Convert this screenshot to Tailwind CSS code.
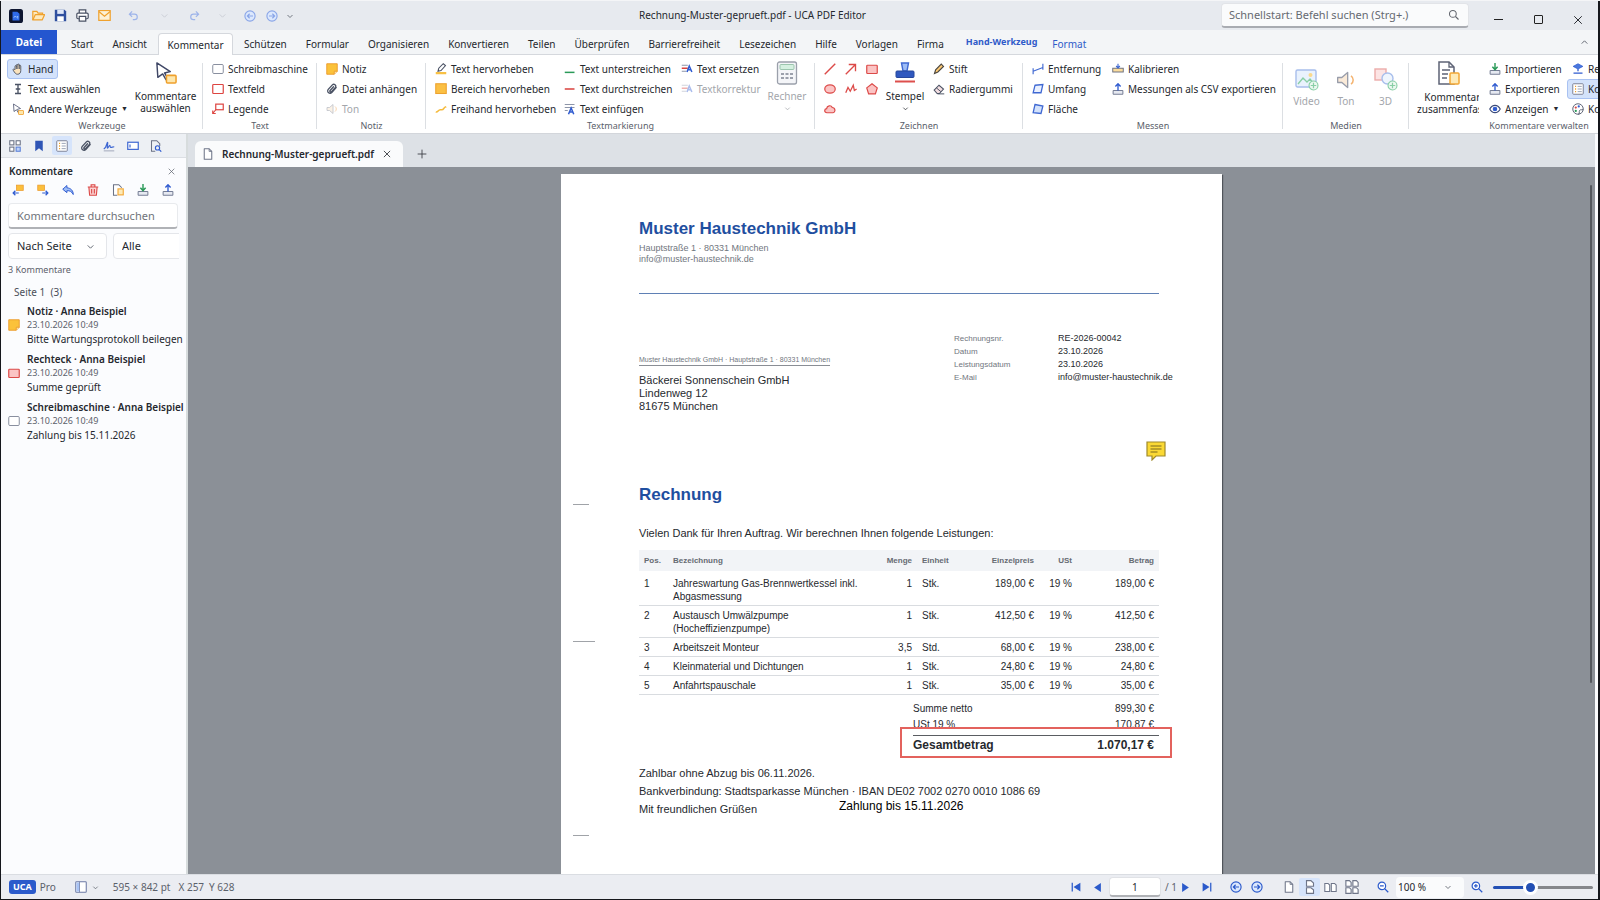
<!DOCTYPE html>
<html lang="de">
<head>
    <meta charset="UTF-8">
    <meta name="viewport" content="width=device-width, initial-scale=1.0">
    <title>Rechnung-Muster-geprueft.pdf - UCA PDF Editor</title>
    <script src="https://cdn.jsdelivr.net/npm/@tailwindcss/browser@4"></script>
</head>
<body class="h-screen overflow-hidden bg-[#15171c] font-['Noto_Sans','Open_Sans',sans-serif] text-[10px] text-[#25282e]">

    <!-- Icon sprite -->
    <svg class="hidden" fill="none">
        <symbol id="i-chevron" viewBox="0 0 16 16"><path d="M3 6l5 5 5-5" fill="none" stroke="currentColor" stroke-width="1.700"/></symbol>
        <symbol id="i-close" viewBox="0 0 16 16"><path d="M3 3l10 10M13 3L3 13" fill="none" stroke="currentColor" stroke-width="1.300"/></symbol>
        <symbol id="i-undo" viewBox="0 0 16 16"><path d="M6 2L2 6l4 4M2 6h7.500a4 4 0 010 8H7" fill="none" stroke="currentColor" stroke-width="1.700"/></symbol>
        <symbol id="i-circle-left" viewBox="0 0 16 16"><circle cx="8" cy="8" r="6.800" fill="#dce8fd" stroke="currentColor" stroke-width="1.500"/><path d="M12 8H4.500M7.500 5l-3 3 3 3" fill="none" stroke="currentColor" stroke-width="1.600"/></symbol>
        <symbol id="i-circle-right" viewBox="0 0 16 16"><circle cx="8" cy="8" r="6.800" fill="#dce8fd" stroke="currentColor" stroke-width="1.500"/><path d="M4 8h7.500M8.500 5l3 3-3 3" fill="none" stroke="currentColor" stroke-width="1.600"/></symbol>
        <symbol id="i-search" viewBox="0 0 16 16"><circle cx="6.500" cy="6.500" r="4.500" fill="none" stroke="currentColor" stroke-width="1.400"/><path d="M10 10l4 4" stroke="currentColor" stroke-width="1.500"/></symbol>
        <symbol id="i-cursor-note" viewBox="0 0 24 24"><path d="M3 2l14 9-6 1.500 3.500 6-2 1-3.500-6L4 17z" fill="#fff" stroke="#3f4766" stroke-width="1.500" stroke-linejoin="round"/><rect x="13" y="15" width="10" height="8" rx="1" fill="#fde7ad" stroke="#efa02c" stroke-width="1.600"/></symbol>
        <symbol id="i-clip" viewBox="0 0 16 16"><path d="M13.500 6L8 12.500a3.200 3.200 0 01-5-4L8.500 2.500a2.600 2.600 0 014 3.300L7.500 11.500a1.200 1.200 0 01-2-1.500L10 5" fill="none" stroke="#4a5264" stroke-width="1.800" stroke-linecap="round"/></symbol>
        <symbol id="i-note" viewBox="0 0 16 16"><path d="M1 1h14v10l-4 4H1z" fill="#fbc23a" stroke="#eb9a2b" stroke-width="1.200"/><path d="M15 11h-4v4" fill="#fde7ad" stroke="#eb9a2b" stroke-width="1.200"/></symbol>
        <symbol id="i-box-gray" viewBox="0 0 16 16"><rect x="1" y="2" width="14" height="12" rx="1.500" fill="#fff" stroke="#868c9c" stroke-width="1.300"/></symbol>
        <symbol id="i-box-red" viewBox="0 0 16 16"><rect x="1" y="2" width="14" height="12" rx="1" fill="#fff" stroke="#dd4440" stroke-width="1.600"/></symbol>
        <symbol id="i-rect-red" viewBox="0 0 16 16"><rect x="1" y="3" width="14" height="11" rx="1" fill="#fbc4c4" stroke="#dc4a48" stroke-width="1.600"/></symbol>
        <symbol id="i-speaker" viewBox="0 0 24 24"><path d="M2 9h5l7-6v18l-7-6H2z" fill="#f9e6cf" stroke="#7f8596" stroke-width="1.600" stroke-linejoin="round"/><path d="M18 7c3.500 2.500 3.500 7.500 0 10" fill="none" stroke="#f2a04a" stroke-width="1.800"/></symbol>
        <symbol id="i-import" viewBox="0 0 16 16"><path d="M1.500 10h13v5h-13z" fill="#e6e9f1" stroke="#727a92" stroke-width="1.300"/><path d="M8 0v8M4.500 5L8 8.800 11.500 5" fill="none" stroke="#2a9a58" stroke-width="1.900"/></symbol>
        <symbol id="i-export" viewBox="0 0 16 16"><path d="M1.500 10h13v5h-13z" fill="#e6e9f1" stroke="#727a92" stroke-width="1.300"/><path d="M8 10V2M4.500 4.700L8 1l3.500 3.700" fill="none" stroke="#2f5bd0" stroke-width="1.800"/></symbol>
        <symbol id="i-plus-green" viewBox="0 0 16 16"><circle cx="8" cy="8" r="6.500" fill="#e0f4e7" stroke="#3bb06c" stroke-width="1.600"/><path d="M8 4v8M4 8h8" stroke="#3bb06c" stroke-width="1.800"/></symbol>
        <symbol id="i-list" viewBox="0 0 16 16"><rect x="1" y="1" width="14" height="14" rx="1" fill="#fff" stroke="#7b8296" stroke-width="1.300"/><path d="M4 4.500h1.500M4 8h1.500M4 11.500h1.500" stroke="#efa02c" stroke-width="1.800"/><path d="M7.500 4.500H13M7.500 8H13M7.500 11.500H13" stroke="#9aa2b6" stroke-width="1.300"/></symbol>
        <symbol id="i-page" viewBox="0 0 16 16"><path d="M3 1h6.500L13 4.500V15H3z" fill="#fff" stroke="#6f7689" stroke-width="1.400" stroke-linejoin="round"/><path d="M9.500 1v3.500H13" fill="none" stroke="#6f7689" stroke-width="1.200"/></symbol>
    </svg>

    <div class="flex h-full flex-col border-t border-[#f4f5f7] pr-[2px] pb-px pl-px">

        <!-- Title bar -->
        <header class="flex h-[29px] shrink-0 items-center bg-[#e7eaef]">
            <div class="flex w-[283px] shrink-0 items-center whitespace-nowrap pl-2">
                <div class="flex w-[151px] shrink-0 items-center gap-[9px]">
                    <svg class="size-[14px] shrink-0" viewBox="0 0 16 16"><rect width="16" height="16" rx="3" fill="#0d1530"/><path d="M4 3h5.500L12 5.500V13H4z" fill="#2f6bea"/><path d="M5.500 10l1.500-2 1.500 1.500L10 8v3" stroke="#9dc3ff" fill="none"/></svg>
                    <button aria-label="Öffnen"><svg class="size-[13px]" viewBox="0 0 16 16"><path d="M1 13.500V3h5l1.500 2H13v2" fill="#fde9bd" stroke="#efa02c" stroke-width="1.500"/><path d="M1 13.500L4 7h11.500l-3 6.500z" fill="#fde9bd" stroke="#efa02c" stroke-width="1.500" stroke-linejoin="round"/></svg></button>
                    <button aria-label="Speichern"><svg class="size-[13px]" viewBox="0 0 16 16"><path d="M1 1h12l2 2v12H1z" fill="#2f4f9f"/><path d="M4 1h8v5H4z" fill="#dfe7f8"/><path d="M4 9h8v6H4z" fill="#fff"/></svg></button>
                    <button aria-label="Drucken"><svg class="size-[13px]" viewBox="0 0 16 16" fill="#fff" stroke="#4a5264" stroke-width="1.500"><path d="M4 5V1h8v4"/><rect x="1" y="5" width="14" height="7" rx="1.500"/><path d="M4 9h8v6H4z"/></svg></button>
                    <button aria-label="Senden"><svg class="size-[13px]" viewBox="0 0 16 16" fill="#fdf1d6" stroke="#efa02c" stroke-width="1.500"><rect x="1" y="2" width="14" height="12"/><path d="M1 3l7 6 7-6"/></svg></button>
                    <button aria-label="Rückgängig" class="ml-2 text-[#9db4ea]"><svg class="size-[11px]"><use href="#i-undo"/></svg></button>
                </div>
                <button aria-label="Rückgängig-Liste" class="text-[#c9cdd5]"><svg class="size-[9px]"><use href="#i-chevron"/></svg></button>
                <button aria-label="Wiederholen" class="ml-5 text-[#9db4ea]"><svg class="size-[11px] -scale-x-100"><use href="#i-undo"/></svg></button>
                <button aria-label="Wiederholen-Liste" class="ml-[18px] text-[#c9cdd5]"><svg class="size-[9px]"><use href="#i-chevron"/></svg></button>
                <button aria-label="Zurück" class="ml-[17px] text-[#8aa6e8]"><svg class="size-[12px]"><use href="#i-circle-left"/></svg></button>
                <button aria-label="Vor" class="ml-[10px] text-[#8aa6e8]"><svg class="size-[12px]"><use href="#i-circle-right"/></svg></button>
                <button aria-label="Anpassen" class="ml-2 text-[#60656f]"><svg class="size-[8px]"><use href="#i-chevron"/></svg></button>
            </div>
            <h1 class="flex-1 text-center">Rechnung-Muster-geprueft.pdf - UCA PDF Editor</h1>
            <label class="flex h-[25px] w-[248px] items-center rounded border border-b-2 border-[#e2e4e8] border-b-[#a9acb2] bg-[#fafbfc] pr-2 pl-[7px] text-[#60646c]">
                <input type="text" aria-label="Schnellstart" placeholder="Schnellstart: Befehl suchen (Strg+.)" class="min-w-0 flex-1 text-[11px] outline-none placeholder:text-[#666a71]">
                <svg class="size-[12px]"><use href="#i-search"/></svg>
            </label>
            <div class="flex items-center pt-2 pl-[9px]">
                <button aria-label="Minimieren" class="flex w-10 justify-center"><span class="h-px w-[9px] bg-[#222]"></span></button>
                <button aria-label="Maximieren" class="flex w-10 justify-center"><span class="size-[9px] rounded-[1px] border border-[#222]"></span></button>
                <button aria-label="Schließen" class="flex w-10 justify-center"><svg class="size-[12px]"><use href="#i-close"/></svg></button>
            </div>
        </header>

        <!-- Ribbon tabs -->
        <nav class="flex h-[25px] shrink-0 items-stretch gap-px border-b border-[#d5d8dd] bg-[#f3f5f7] leading-[20px]">
            <button class="w-14 bg-[#2456cf] font-bold text-white">Datei</button>
            <button class="ml-1 px-[9px] pt-1">Start</button>
            <button class="px-[9px] pt-1">Ansicht</button>
            <button class="mx-px mt-[3px] -mb-px w-[75px] rounded-t border border-b-0 border-[#d5d8dd] bg-white">Kommentar</button>
            <button class="px-[9px] pt-1">Schützen</button>
            <button class="px-[9px] pt-1">Formular</button>
            <button class="px-[9px] pt-1">Organisieren</button>
            <button class="px-[9px] pt-1">Konvertieren</button>
            <button class="px-[9px] pt-1">Teilen</button>
            <button class="px-[9px] pt-1">Überprüfen</button>
            <button class="px-[9px] pt-1">Barrierefreiheit</button>
            <button class="px-[9px] pt-1">Lesezeichen</button>
            <button class="px-[9px] pt-1">Hilfe</button>
            <button class="px-[9px] pt-1">Vorlagen</button>
            <button class="px-[9px] pt-1">Firma</button>
            <span class="pt-[2px] pr-[5px] pl-3 text-[9px] font-bold text-[#2f5bc9]">Hand-Werkzeug</span>
            <button class="px-[9px] pt-1 text-[#2f5bc9]">Format</button>
            <button aria-label="Menüband einklappen" class="mr-[9px] ml-auto text-[#60656f]"><svg class="size-[9px] rotate-180"><use href="#i-chevron"/></svg></button>
        </nav>

        <!-- Ribbon -->
        <section class="flex h-[79px] shrink-0 overflow-hidden border-b border-[#d3d6db] bg-white pt-1 whitespace-nowrap">

            <div class="relative flex w-[202px] shrink-0 flex-col">
                <div class="flex h-[60px] pl-[6px]">
                    <div class="flex w-[123px] flex-col items-start">
                        <button class="flex h-5 items-center gap-1 rounded-[3px] border border-[#a9c2f2] bg-[#d3e2fb] px-1">
                            <svg class="size-[12px]" viewBox="0 0 16 16" fill="#fbe3bd" stroke="#4a5264" stroke-width="1.200" stroke-linejoin="round"><path d="M4 9V4.500c0-1.300 1.800-1.300 1.800 0V3c0-1.500 2-1.500 2 0v-.5c0-1.500 2-1.500 2 0V4c0-1.300 1.900-1.300 1.900 0v6c0 3-1.500 5-4.200 5-2.500 0-3.500-1.500-6-5.500-.6-1.200.9-2 1.700-1z"/><path d="M5.800 4v4M7.800 3v5M9.800 3.500V8"/></svg>
                            <span>Hand</span>
                        </button>
                        <button class="flex h-5 items-center gap-1 border border-transparent px-1">
                            <svg class="size-[12px]" viewBox="0 0 16 16" fill="none" stroke="#4a5264" stroke-width="1.800"><path d="M4 2h8M4 14h8M8 2v12M5 8h6"/></svg>
                            <span>Text auswählen</span>
                        </button>
                        <button class="flex h-5 items-center gap-1 border border-transparent px-1">
                            <svg class="size-[12px]"><use href="#i-cursor-note"/></svg>
                            <span>Andere Werkzeuge</span><span class="text-[7px]">▼</span>
                        </button>
                    </div>
                    <button class="flex w-[71px] flex-col items-center leading-[12px]">
                        <svg class="mt-[2px] mb-[6px] size-[23px] shrink-0"><use href="#i-cursor-note"/></svg>
                        Kommentare<br>auswählen
                    </button>
                </div>
                <p class="text-center text-[9px] leading-[13px] text-[#5b616b]">Werkzeuge</p>
                <span class="absolute inset-y-1 right-0 w-px bg-[#dcdfe3]"></span>
            </div>

            <div class="relative flex w-[114px] shrink-0 flex-col">
                <div class="flex h-[60px] flex-col items-start pl-1">
                    <button class="flex h-5 items-center gap-1 border border-transparent px-1"><svg class="size-[12px]"><use href="#i-box-gray"/></svg>Schreibmaschine</button>
                    <button class="flex h-5 items-center gap-1 border border-transparent px-1"><svg class="size-[12px]"><use href="#i-box-red"/></svg>Textfeld</button>
                    <button class="flex h-5 items-center gap-1 border border-transparent px-1"><svg class="size-[12px]" viewBox="0 0 16 16" fill="none" stroke="#dd4440" stroke-width="1.600"><rect x="5" y="1.500" width="10" height="7.500"/><path d="M5 9l-4 5M1 10v4h4"/></svg>Legende</button>
                </div>
                <p class="text-center text-[9px] leading-[13px] text-[#5b616b]">Text</p>
                <span class="absolute inset-y-1 right-0 w-px bg-[#dcdfe3]"></span>
            </div>

            <div class="relative flex w-[109px] shrink-0 flex-col">
                <div class="flex h-[60px] flex-col items-start pl-1">
                    <button class="flex h-5 items-center gap-1 border border-transparent px-1"><svg class="size-[12px]"><use href="#i-note"/></svg>Notiz</button>
                    <button class="flex h-5 items-center gap-1 border border-transparent px-1"><svg class="size-[12px]"><use href="#i-clip"/></svg>Datei anhängen</button>
                    <button class="flex h-5 items-center gap-1 border border-transparent px-1 text-[#a3a6ab]" disabled><svg class="size-[12px] opacity-50"><use href="#i-speaker"/></svg>Ton</button>
                </div>
                <p class="text-center text-[9px] leading-[13px] text-[#5b616b]">Notiz</p>
                <span class="absolute inset-y-1 right-0 w-px bg-[#dcdfe3]"></span>
            </div>

            <div class="relative flex w-[389px] shrink-0 flex-col">
                <div class="flex h-[60px] pl-1">
                    <div class="flex w-[129px] flex-col items-start">
                        <button class="flex h-5 items-center gap-1 border border-transparent px-1"><svg class="size-[12px]" viewBox="0 0 16 16"><path d="M1 13.500h14" stroke="#f8c043" stroke-width="3"/><path d="M4 11l1-4 6-6 3 2.500-6 6.500z" fill="#fff" stroke="#4a5264" stroke-width="1.400"/></svg>Text hervorheben</button>
                        <button class="flex h-5 items-center gap-1 border border-transparent px-1"><svg class="size-[12px]" viewBox="0 0 16 16"><rect x="1" y="1" width="14" height="13" fill="#fbc044" stroke="#eda22e" stroke-width="1.400"/></svg>Bereich hervorheben</button>
                        <button class="flex h-5 items-center gap-1 border border-transparent px-1"><svg class="size-[12px]" viewBox="0 0 16 16" fill="none"><path d="M1 12c3 1 3-3 6-3s3 1 5-2 1-1 3-2" stroke="#f5bb3d" stroke-width="2"/></svg>Freihand hervorheben</button>
                    </div>
                    <div class="flex w-[117px] flex-col items-start">
                        <button class="flex h-5 items-center gap-1 border border-transparent px-1"><svg class="size-[12px]" viewBox="0 0 16 16"><path d="M1 12.500h13" stroke="#2a9a58" stroke-width="2"/></svg>Text unterstreichen</button>
                        <button class="flex h-5 items-center gap-1 border border-transparent px-1"><svg class="size-[12px]" viewBox="0 0 16 16"><path d="M1 8h13" stroke="#d9413d" stroke-width="2"/></svg>Text durchstreichen</button>
                        <button class="flex h-5 items-center gap-1 border border-transparent px-1"><svg class="size-[12px]" viewBox="0 0 16 16" fill="none"><path d="M1 2h13M1 6h13M1 10h4" stroke="#8d95a8" stroke-width="1.500"/><path d="M6 15L9.500 6.500 13 15M7.500 12h4" stroke="#2f5bd0" stroke-width="2"/></svg>Text einfügen</button>
                    </div>
                    <div class="flex w-[88px] flex-col items-start">
                        <button class="flex h-5 items-center gap-1 border border-transparent px-1"><svg class="size-[12px]" viewBox="0 0 16 16" fill="none"><path d="M1 3h8M1 11h6" stroke="#8d95a8" stroke-width="1.500"/><path d="M1 7h8" stroke="#d9413d" stroke-width="2"/><path d="M8 12l3-8 3.500 8M9 9h4" stroke="#2f5bd0" stroke-width="2"/></svg>Text ersetzen</button>
                        <button class="flex h-5 items-center gap-1 border border-transparent px-1 text-[#a3a6ab]" disabled><svg class="size-[12px] opacity-40" viewBox="0 0 16 16" fill="none"><path d="M1 3h8M1 11h6" stroke="#8d95a8" stroke-width="1.500"/><path d="M1 7h8" stroke="#d9413d" stroke-width="2"/><path d="M8 12l3-8 3.500 8M9 9h4" stroke="#2f5bd0" stroke-width="2"/></svg>Textkorrektur</button>
                    </div>
                    <button class="flex w-[46px] flex-col items-center leading-[12px] text-[#a3a6ab]" disabled>
                        <svg class="mt-[2px] mb-[5px] size-[24px] shrink-0" viewBox="0 0 24 24"><rect x="2.500" y="1" width="19" height="22" rx="2" fill="#f4f5f8" stroke="#9ba0ab" stroke-width="1.300"/><rect x="5" y="3.500" width="14" height="5" rx="1" fill="#d5f0e0" stroke="#9cc5ae"/><path d="M6 13h12M6 17h12" stroke="#9ba0ab" stroke-width="1.800" stroke-dasharray="3 1.500"/></svg>
                        Rechner
                        <svg class="mt-[3px] size-[7px]"><use href="#i-chevron"/></svg>
                    </button>
                </div>
                <p class="text-center text-[9px] leading-[13px] text-[#5b616b]">Textmarkierung</p>
                <span class="absolute inset-y-1 right-0 w-px bg-[#dcdfe3]"></span>
            </div>

            <div class="relative flex w-[208px] shrink-0 flex-col">
                <div class="flex h-[60px] pl-1">
                    <div class="grid w-[63px] grid-cols-3 place-items-center">
                        <button aria-label="Linie"><svg class="size-[12px]" viewBox="0 0 16 16"><path d="M1 15L15 1" stroke="#dc4a48" stroke-width="1.800"/></svg></button>
                        <button aria-label="Pfeil"><svg class="size-[12px]" viewBox="0 0 16 16" fill="none" stroke="#dc4a48" stroke-width="1.800"><path d="M1 15L14 2M5 2h9v9"/></svg></button>
                        <button aria-label="Rechteck"><svg class="size-[12px]"><use href="#i-rect-red"/></svg></button>
                        <button aria-label="Ellipse"><svg class="size-[12px]" viewBox="0 0 16 16"><ellipse cx="8" cy="8" rx="7" ry="5.500" fill="#fbc4c4" stroke="#dc4a48" stroke-width="1.600"/></svg></button>
                        <button aria-label="Linienzug"><svg class="size-[12px]" viewBox="0 0 16 16"><path d="M1 13l3-7 3 5 4-8 1.500 7 3-2" fill="none" stroke="#dc4a48" stroke-width="1.700"/></svg></button>
                        <button aria-label="Polygon"><svg class="size-[12px]" viewBox="0 0 16 16"><path d="M8 1l7 5.500-2.500 8h-9L1 6.500z" fill="#fbc4c4" stroke="#dc4a48" stroke-width="1.600"/></svg></button>
                        <button aria-label="Wolke"><svg class="size-[12px]" viewBox="0 0 16 16"><path d="M4 13c-4 0-4-5-.5-5.500C4 3 9.500 2.500 11 6c4 0 5 6 1 7z" fill="#fbc4c4" stroke="#dc4a48" stroke-width="1.600"/></svg></button>
                    </div>
                    <button class="flex w-[46px] flex-col items-center leading-[12px]">
                        <svg class="mt-[2px] mb-[5px] size-[24px] shrink-0" viewBox="0 0 24 24"><path d="M8.500 2h7l-1.500 8h-4z" fill="#9dbcf6" stroke="#3f68d2" stroke-width="1.400"/><rect x="3" y="10" width="18" height="6.500" rx="1" fill="#2f58bf" stroke="#27489c"/><path d="M2 20.500h20" stroke="#dd4f4c" stroke-width="2"/></svg>
                        Stempel
                        <svg class="mt-[3px] size-[7px]"><use href="#i-chevron"/></svg>
                    </button>
                    <div class="flex flex-col items-start">
                        <button class="flex h-5 items-center gap-1 border border-transparent px-1"><svg class="size-[12px]" viewBox="0 0 16 16"><path d="M2 14l1.500-5L11 1.500l3 3L6.500 12z" fill="#fbc873" stroke="#4a4640" stroke-width="1.500"/></svg>Stift</button>
                        <button class="flex h-5 items-center gap-1 border border-transparent px-1"><svg class="size-[12px]" viewBox="0 0 16 16"><path d="M1.500 9.500L8 3l6 5-5.500 6H5.500z" fill="#f4dfe2" stroke="#4a5264" stroke-width="1.400"/><path d="M4.500 6.500l6 5M6 14.500h9" stroke="#4a5264" stroke-width="1.300"/></svg>Radiergummi</button>
                    </div>
                </div>
                <p class="text-center text-[9px] leading-[13px] text-[#5b616b]">Zeichnen</p>
                <span class="absolute inset-y-1 right-0 w-px bg-[#dcdfe3]"></span>
            </div>

            <div class="relative flex w-[260px] shrink-0 flex-col">
                <div class="flex h-[60px] pl-1">
                    <div class="flex w-20 flex-col items-start">
                        <button class="flex h-5 items-center gap-1 border border-transparent px-1"><svg class="size-[12px]" viewBox="0 0 16 16" fill="none" stroke="#3f68d2" stroke-width="1.500"><path d="M1.500 7v8M14.500 1v8M1.500 11l13-5"/></svg>Entfernung</button>
                        <button class="flex h-5 items-center gap-1 border border-transparent px-1"><svg class="size-[12px]" viewBox="0 0 16 16" fill="#eaf1ff" stroke="#3f68d2" stroke-width="1.700"><path d="M4 3l10.500-1L12 13H1.500z"/></svg>Umfang</button>
                        <button class="flex h-5 items-center gap-1 border border-transparent px-1"><svg class="size-[12px]" viewBox="0 0 16 16" fill="#d3e2fb" stroke="#3f68d2" stroke-width="1.700"><path d="M4 2l10.500 2L12 14l-10.500-1z"/></svg>Fläche</button>
                    </div>
                    <div class="flex flex-col items-start">
                        <button class="flex h-5 items-center gap-1 border border-transparent px-1"><svg class="size-[12px]" viewBox="0 0 16 16"><rect x="1" y="7" width="14" height="5" fill="#fbdc9c" stroke="#6b7080" stroke-width="1.300"/><path d="M8 1v5M5.500 4L8 6.500 10.500 4" fill="none" stroke="#3f68d2" stroke-width="1.500"/></svg>Kalibrieren</button>
                        <button class="flex h-5 items-center gap-1 border border-transparent px-1"><svg class="size-[12px]"><use href="#i-export"/></svg>Messungen als CSV exportieren</button>
                    </div>
                </div>
                <p class="text-center text-[9px] leading-[13px] text-[#5b616b]">Messen</p>
                <span class="absolute inset-y-1 right-0 w-px bg-[#dcdfe3]"></span>
            </div>

            <div class="relative flex w-[126px] shrink-0 flex-col">
                <div class="flex h-[60px] items-center justify-center text-[#a3a6ab]">
                    <button class="flex w-10 flex-col items-center gap-[3px] pb-[2px] leading-[13px]" disabled>
                        <svg class="size-[24px] opacity-60" viewBox="0 0 24 24"><rect x="1" y="2" width="20" height="17" rx="1.500" fill="#dceafd" stroke="#6f94e0" stroke-width="1.400"/><path d="M3 16l5-6 4 4 3-3 4 5" fill="none" stroke="#3bb06c" stroke-width="1.300"/><circle cx="15.500" cy="7" r="2" fill="#f8c043"/><use href="#i-plus-green" x="13" y="12" width="11" height="11"/></svg>
                        Video
                    </button>
                    <button class="flex w-[39px] flex-col items-center gap-[3px] pb-[2px] leading-[13px]" disabled>
                        <svg class="size-[24px] p-[2px] opacity-80"><use href="#i-speaker"/></svg>
                        Ton
                    </button>
                    <button class="flex w-10 flex-col items-center gap-[3px] pb-[2px] leading-[13px]" disabled>
                        <svg class="size-[24px] opacity-60" viewBox="0 0 24 24"><rect x="1" y="1" width="11" height="11" fill="#fbd3d3" stroke="#e07472" stroke-width="1.400"/><circle cx="13.500" cy="10.500" r="5.500" fill="#e6effd" stroke="#6f94e0" stroke-width="1.400"/><use href="#i-plus-green" x="13" y="12" width="11" height="11"/></svg>
                        3D
                    </button>
                </div>
                <p class="text-center text-[9px] leading-[13px] text-[#5b616b]">Medien</p>
                <span class="absolute inset-y-1 right-0 w-px bg-[#dcdfe3]"></span>
            </div>

            <div class="flex w-[260px] shrink-0 flex-col">
                <div class="flex h-[60px] pl-2">
                    <button class="flex w-[62px] flex-col overflow-hidden leading-[12px]">
                        <svg class="mt-[2px] mb-[6px] ml-[19px] size-[24px] shrink-0" viewBox="0 0 24 24"><path d="M3 1h10l5 5v17H3z" fill="#fff" stroke="#5d6375" stroke-width="1.500"/><path d="M13 1v5h5M6 9h8M6 13h6M6 17h5" fill="none" stroke="#5d6375" stroke-width="1.300"/><rect x="14" y="12" width="9" height="11" rx="1" fill="#fdeab8" stroke="#f2a735" stroke-width="1.500"/></svg>
                        <span class="w-[76px] text-center">Kommentare<br>zusammenfassen</span>
                    </button>
                    <div class="ml-[5px] flex w-[83px] flex-col items-start">
                        <button class="flex h-5 items-center gap-1 border border-transparent px-1"><svg class="size-[12px]"><use href="#i-import"/></svg>Importieren</button>
                        <button class="flex h-5 items-center gap-1 border border-transparent px-1"><svg class="size-[12px]"><use href="#i-export"/></svg>Exportieren</button>
                        <button class="flex h-5 items-center gap-1 border border-transparent px-1"><svg class="size-[12px]" viewBox="0 0 16 16" fill="#fff" stroke="#3c4b78" stroke-width="1.500"><path d="M1 8c3.500-6.500 10.500-6.500 14 0-3.500 6.500-10.500 6.500-14 0z"/><circle cx="8" cy="8" r="2.300" fill="#2f5bd0" stroke="#2f5bd0"/></svg><span>Anzeigen</span><span class="text-[7px]">▼</span></button>
                    </div>
                    <div class="flex w-24 flex-col">
                        <button class="flex h-5 items-center gap-1 border border-transparent px-1"><svg class="size-[12px]" viewBox="0 0 16 16"><path d="M8 1l6.500 3.500L8 8 1.500 4.500z" fill="#4a78de" stroke="#2f5bd0"/><path d="M8 8v3M2 13.500h12" stroke="#2f5bd0" stroke-width="1.700"/></svg>Re</button>
                        <button class="flex h-5 items-center gap-1 rounded-[3px] border border-[#a9c2f2] bg-[#d3e2fb] px-1"><svg class="size-[12px]"><use href="#i-list"/></svg>Ko</button>
                        <button class="flex h-5 items-center gap-1 border border-transparent px-1"><svg class="size-[12px]" viewBox="0 0 16 16"><path d="M8 1a7 7 0 107 7c0 2-4 0-5 2s1 5-2 5" fill="#fff" stroke="#5d6375" stroke-width="1.300"/><path d="M8 1a7 7 0 017 7" fill="none" stroke="#5d6375" stroke-width="1.300"/><circle cx="5" cy="6" r="1.500" fill="#dc4a48"/><circle cx="9" cy="4.500" r="1.500" fill="#2f5bd0"/><circle cx="5" cy="10.500" r="1.500" fill="#2a9a58"/></svg>Ko</button>
                    </div>
                </div>
                <p class="text-center text-[9px] leading-[13px] text-[#5b616b]">Kommentare verwalten</p>
            </div>
        </section>

        <div class="flex min-h-0 flex-1 bg-[#fbfcfe]">

            <!-- Comments panel -->
            <aside class="flex w-[187px] shrink-0 flex-col overflow-hidden border-r-2 border-[#d7dcdd]">
                <div class="flex h-[24px] shrink-0 items-center justify-between border-b border-[#dcdfe4] bg-[#edf0f4] pr-5 pl-1">
                    <button aria-label="Seiten" class="flex h-[19px] w-5 items-center justify-center"><svg class="size-[12px]" viewBox="0 0 16 16" fill="#fff" stroke="#6b7285" stroke-width="1.400"><rect x="1" y="1" width="5.500" height="5.500"/><rect x="9.500" y="1" width="5.500" height="5.500"/><rect x="1" y="9.500" width="5.500" height="5.500"/><rect x="9.500" y="9.500" width="5.500" height="5.500" fill="#bcd2f8" stroke="#5b80d8"/></svg></button>
                    <button aria-label="Lesezeichen" class="flex h-[19px] w-5 items-center justify-center"><svg class="size-[12px]" viewBox="0 0 16 16"><path d="M3 1h10v14l-5-4-5 4z" fill="#2f55b5"/></svg></button>
                    <button aria-label="Kommentare" class="flex h-[19px] w-5 items-center justify-center rounded-[2px] bg-[#d6e4fb]"><svg class="size-[12px]"><use href="#i-list"/></svg></button>
                    <button aria-label="Anlagen" class="flex h-[19px] w-5 items-center justify-center"><svg class="size-[12px]"><use href="#i-clip"/></svg></button>
                    <button aria-label="Signaturen" class="flex h-[19px] w-5 items-center justify-center"><svg class="size-[12px]" viewBox="0 0 16 16" fill="none"><path d="M1 12c4-2 4-9 5-9s-1 8 0 8 2-4 3-4 0 3 1.500 3S13 9 15 9" stroke="#3f68d2" stroke-width="1.600"/><path d="M1 14.500h14" stroke="#9aa2b6" stroke-width="1.200"/></svg></button>
                    <button aria-label="Formularfelder" class="flex h-[19px] w-5 items-center justify-center"><svg class="size-[12px]" viewBox="0 0 16 16" fill="#fff" stroke="#3f68d2" stroke-width="1.600"><rect x="1" y="3" width="14" height="9.500"/><path d="M4 6v4"/></svg></button>
                    <button aria-label="Suche" class="flex h-[19px] w-5 items-center justify-center"><svg class="size-[12px]" viewBox="0 0 16 16" fill="none"><path d="M7 15H2V1h7l4 4v3" stroke="#6b7285" stroke-width="1.400"/><circle cx="10" cy="10.500" r="2.800" stroke="#2f5bd0" stroke-width="1.500"/><path d="M12 12.500l3 3" stroke="#2f5bd0" stroke-width="1.600"/></svg></button>
                </div>
                <div class="flex h-[24px] shrink-0 items-center justify-between pt-[2px] pr-[10px] pl-2">
                    <h2 class="font-semibold">Kommentare</h2>
                    <button aria-label="Bereich schließen" class="text-[#60656f]"><svg class="size-[9px]"><use href="#i-close"/></svg></button>
                </div>
                <div class="flex h-[16px] shrink-0 items-center pl-1">
                    <button aria-label="Vorheriger" class="flex w-[25px] justify-center"><svg class="size-[12px]" viewBox="0 0 16 16"><rect x="6" y="1.500" width="9" height="7" fill="#fbbf3c" stroke="#eb9a2b"/><path d="M9 12H1.500M4.500 9l-3 3 3 3" fill="none" stroke="#2f5bd0" stroke-width="1.600"/></svg></button>
                    <button aria-label="Nächster" class="flex w-[25px] justify-center"><svg class="size-[12px]" viewBox="0 0 16 16"><rect x="1" y="1.500" width="9" height="7" fill="#fbbf3c" stroke="#eb9a2b"/><path d="M7 12h7.500M11.500 9l3 3-3 3" fill="none" stroke="#2f5bd0" stroke-width="1.600"/></svg></button>
                    <button aria-label="Antworten" class="flex w-[25px] justify-center"><svg class="size-[12px]" viewBox="0 0 16 16"><path d="M6.500 2L1 7l5.500 4.500V9C10 8.500 13 10 15 14c0-5-3-8.500-8.500-9z" fill="#9dbcf6" stroke="#2f5bd0" stroke-width="1.300"/></svg></button>
                    <button aria-label="Löschen" class="flex w-[25px] justify-center"><svg class="size-[12px]" viewBox="0 0 16 16" fill="#fbd3d3" stroke="#dc4a48" stroke-width="1.500"><path d="M2.500 4h11L12.500 15h-9zM1 4h14M5.500 4V1h5v3M6.200 6.500v6M9.800 6.500v6"/></svg></button>
                    <button aria-label="Zusammenfassen" class="flex w-[25px] justify-center"><svg class="size-[12px]" viewBox="0 0 16 16"><path d="M7 15H2V1h7l4 4" fill="#fff" stroke="#6b7285" stroke-width="1.400"/><rect x="8" y="6.500" width="7" height="8" fill="#fdeab8" stroke="#f2a735" stroke-width="1.500"/></svg></button>
                    <button aria-label="Importieren" class="flex w-[25px] justify-center"><svg class="size-[12px]"><use href="#i-import"/></svg></button>
                    <button aria-label="Exportieren" class="flex w-[25px] justify-center"><svg class="size-[12px]"><use href="#i-export"/></svg></button>
                </div>
                <input type="text" aria-label="Kommentare durchsuchen" placeholder="Kommentare durchsuchen" class="mt-[5px] mr-2 ml-[7px] h-[26px] shrink-0 rounded border border-b-2 border-[#e8eaed] border-b-[#b0b2b6] bg-white pl-2 text-[11px] outline-none placeholder:text-[#6f7379]">
                <div class="mt-1 mr-[7px] ml-[7px] flex shrink-0 gap-[6px] overflow-hidden">
                    <label class="relative flex w-[99px] shrink-0 items-center">
                        <select aria-label="Sortierung" class="h-[26px] w-full appearance-none rounded border border-[#e4e6ea] bg-white pl-2 text-[11px]"><option>Nach Seite</option></select>
                        <svg class="pointer-events-none absolute right-3 size-[9px] text-[#60656f]"><use href="#i-chevron"/></svg>
                    </label>
                    <select aria-label="Filter" class="h-[26px] w-[99px] shrink-0 appearance-none rounded border border-[#e4e6ea] bg-white pl-2 text-[11px]"><option>Alle</option></select>
                </div>
                <p class="mt-1 pl-[7px] text-[9px] leading-[14px] text-[#5b616b]">3 Kommentare</p>
                <h3 class="mt-2 pl-[13px] leading-[14px] whitespace-pre text-[#4a4f58]">Seite 1  (3)</h3>
                <ul class="mt-[5px] flex flex-col gap-[6px] leading-[14px] whitespace-nowrap">
                    <li class="flex items-center gap-[7px] pl-[7px]">
                        <svg class="size-[12px] shrink-0"><use href="#i-note"/></svg>
                        <div><p class="font-semibold">Notiz · Anna Beispiel</p><p class="text-[9px] text-[#5b616b]">23.10.2026 10:49</p><p>Bitte Wartungsprotokoll beilegen</p></div>
                    </li>
                    <li class="flex items-center gap-[7px] pl-[7px]">
                        <svg class="size-[12px] shrink-0"><use href="#i-rect-red"/></svg>
                        <div><p class="font-semibold">Rechteck · Anna Beispiel</p><p class="text-[9px] text-[#5b616b]">23.10.2026 10:49</p><p>Summe geprüft</p></div>
                    </li>
                    <li class="flex items-center gap-[7px] pl-[7px]">
                        <svg class="size-[12px] shrink-0"><use href="#i-box-gray"/></svg>
                        <div><p class="font-semibold">Schreibmaschine · Anna Beispiel</p><p class="text-[9px] text-[#5b616b]">23.10.2026 10:49</p><p>Zahlung bis 15.11.2026</p></div>
                    </li>
                </ul>
            </aside>

            <!-- Document area -->
            <main class="mr-[3px] flex min-w-0 flex-1 flex-col">
                <div class="flex h-[33px] shrink-0 items-end bg-[#dde1e6] pl-[7px]">
                    <div class="flex h-[26px] w-[208px] items-center rounded-t-md bg-[#fafbfc] px-[7px] font-semibold">
                        <svg class="mr-2 size-[12px]"><use href="#i-page"/></svg>
                        Rechnung-Muster-geprueft.pdf
                        <button aria-label="Tab schließen" class="mr-1 ml-auto"><svg class="size-[10px]"><use href="#i-close"/></svg></button>
                    </div>
                    <button aria-label="Neuer Tab" class="mb-2 ml-[14px]"><svg class="size-[10px]" viewBox="0 0 16 16"><path d="M8 1v14M1 8h14" stroke="#3a3d44" stroke-width="1.400"/></svg></button>
                </div>

                <div class="relative min-h-0 flex-1 overflow-hidden bg-[#8b9097]">
                    <span class="absolute top-[18px] right-[3px] h-[498px] w-[2px] rounded bg-[#53575d]"></span>

                    <article class="relative mx-auto mt-[7px] h-[935px] w-[661px] bg-white pr-[63px] pl-[78px] font-['Liberation_Sans',Arial,sans-serif] text-[#26292e] shadow-[1px_1px_1px_#50545a]">
                        <h2 class="pt-[43px] text-[17px] leading-6 font-bold text-[#1f4fa0]">Muster Haustechnik GmbH</h2>
                        <p class="mt-[2px] text-[9px] leading-[11px] text-[#71767e]">Hauptstraße 1 · 80331 München<br>info@muster-haustechnik.de</p>
                        <hr class="mt-[28px] border-[#5f80b5]">

                        <div class="mt-[38px] flex justify-between">
                            <div class="pt-[23px]">
                                <p class="w-fit border-b border-[#8a8e95] text-[7px] leading-[10px] text-[#71767e]">Muster Haustechnik GmbH · Hauptstraße 1 · 80331 München</p>
                                <p class="mt-2 text-[11px] leading-[13px]">Bäckerei Sonnenschein GmbH<br>Lindenweg 12<br>81675 München</p>
                            </div>
                            <dl class="grid w-[205px] grid-cols-[104px_1fr] content-start text-[9px] leading-[13px] whitespace-nowrap">
                                <dt class="text-[8px] text-[#71767e]">Rechnungsnr.</dt><dd>RE-2026-00042</dd>
                                <dt class="text-[8px] text-[#71767e]">Datum</dt><dd>23.10.2026</dd>
                                <dt class="text-[8px] text-[#71767e]">Leistungsdatum</dt><dd>23.10.2026</dd>
                                <dt class="text-[8px] text-[#71767e]">E-Mail</dt><dd>info@muster-haustechnik.de</dd>
                            </dl>
                        </div>

                        <h2 class="mt-[70px] text-[17px] leading-6 font-bold text-[#1f4fa0]">Rechnung</h2>
                        <p class="mt-[18px] text-[11px] leading-4">Vielen Dank für Ihren Auftrag. Wir berechnen Ihnen folgende Leistungen:</p>

                        <table class="mt-[9px] w-full table-fixed text-left text-[10px] leading-[13px]">
                            <thead>
                                <tr class="h-[21px] bg-[#f2f4f7] text-[8px] text-[#666b73]">
                                    <th class="w-[29px] pl-[5px]">Pos.</th>
                                    <th class="w-[199px] px-[5px]">Bezeichnung</th>
                                    <th class="w-[50px] px-[5px] text-right">Menge</th>
                                    <th class="w-[58px] px-[5px]">Einheit</th>
                                    <th class="w-[64px] px-[5px] text-right">Einzelpreis</th>
                                    <th class="w-[38px] px-[5px] text-right">USt</th>
                                    <th class="px-[5px] text-right">Betrag</th>
                                </tr>
                            </thead>
                            <tbody class="align-top">
                                <tr class="border-b border-[#d9dce0]">
                                    <td class="px-[5px] pt-[6px] pb-[2px]">1</td><td class="px-[5px] pt-[6px] pb-[2px]">Jahreswartung Gas-Brennwertkessel inkl. Abgasmessung</td><td class="px-[5px] pt-[6px] text-right">1</td><td class="px-[5px] pt-[6px]">Stk.</td><td class="px-[5px] pt-[6px] text-right">189,00 €</td><td class="px-[5px] pt-[6px] text-right whitespace-nowrap">19 %</td><td class="px-[5px] pt-[6px] text-right">189,00 €</td>
                                </tr>
                                <tr class="border-b border-[#d9dce0]">
                                    <td class="px-[5px] pt-[3px] pb-[2px]">2</td><td class="px-[5px] pt-[3px] pb-[2px]">Austausch Umwälzpumpe (Hocheffizienzpumpe)</td><td class="px-[5px] pt-[3px] text-right">1</td><td class="px-[5px] pt-[3px]">Stk.</td><td class="px-[5px] pt-[3px] text-right">412,50 €</td><td class="px-[5px] pt-[3px] text-right whitespace-nowrap">19 %</td><td class="px-[5px] pt-[3px] text-right">412,50 €</td>
                                </tr>
                                <tr class="border-b border-[#d9dce0]">
                                    <td class="px-[5px] pt-[3px] pb-[2px]">3</td><td class="px-[5px] pt-[3px] pb-[2px]">Arbeitszeit Monteur</td><td class="px-[5px] pt-[3px] text-right">3,5</td><td class="px-[5px] pt-[3px]">Std.</td><td class="px-[5px] pt-[3px] text-right">68,00 €</td><td class="px-[5px] pt-[3px] text-right whitespace-nowrap">19 %</td><td class="px-[5px] pt-[3px] text-right">238,00 €</td>
                                </tr>
                                <tr class="border-b border-[#d9dce0]">
                                    <td class="px-[5px] pt-[3px] pb-[2px]">4</td><td class="px-[5px] pt-[3px] pb-[2px]">Kleinmaterial und Dichtungen</td><td class="px-[5px] pt-[3px] text-right">1</td><td class="px-[5px] pt-[3px]">Stk.</td><td class="px-[5px] pt-[3px] text-right">24,80 €</td><td class="px-[5px] pt-[3px] text-right whitespace-nowrap">19 %</td><td class="px-[5px] pt-[3px] text-right">24,80 €</td>
                                </tr>
                                <tr class="border-b border-[#d9dce0]">
                                    <td class="px-[5px] pt-[3px] pb-[2px]">5</td><td class="px-[5px] pt-[3px] pb-[2px]">Anfahrtspauschale</td><td class="px-[5px] pt-[3px] text-right">1</td><td class="px-[5px] pt-[3px]">Stk.</td><td class="px-[5px] pt-[3px] text-right">35,00 €</td><td class="px-[5px] pt-[3px] text-right whitespace-nowrap">19 %</td><td class="px-[5px] pt-[3px] text-right">35,00 €</td>
                                </tr>
                            </tbody>
                        </table>

                        <div class="mt-[6px] ml-auto w-[246px] text-[10px] leading-4">
                            <p class="flex justify-between pr-[5px]"><span>Summe netto</span><span>899,30 €</span></p>
                            <p class="flex h-[10px] justify-between overflow-hidden pr-[5px]"><span>USt 19 %</span><span>170,87 €</span></p>
                            <p class="mt-2 flex justify-between border-t border-[#5a5d62] pt-[1px] pr-[5px] text-[12px] font-bold"><span>Gesamtbetrag</span><span>1.070,17 €</span></p>
                        </div>
                        <div class="mt-3 flex flex-col gap-[2px] text-[11px] leading-4">
                            <p>Zahlbar ohne Abzug bis 06.11.2026.</p>
                            <p>Bankverbindung: Stadtsparkasse München · IBAN DE02 7002 0270 0010 1086 69</p>
                            <p>Mit freundlichen Grüßen</p>
                        </div>

                        <!-- Fold marks -->
                        <span class="absolute top-[330px] left-3 h-px w-4 bg-[#a0a3a8]"></span>
                        <span class="absolute top-[467px] left-3 h-px w-[22px] bg-[#a0a3a8]"></span>
                        <span class="absolute top-[661px] left-3 h-px w-4 bg-[#a0a3a8]"></span>

                        <!-- Annotations -->
                        <svg class="absolute top-[267px] left-[585px] size-[20px]" viewBox="0 0 20 20"><path d="M1 1h18v14h-9l-4 4v-4H1z" fill="#fbd934" stroke="#a08a2a" stroke-width="1.200"/><path d="M4.500 5h11M4.500 8h11M4.500 11h7" stroke="#7c6a1c" stroke-width="1.200"/></svg>
                        <span class="absolute top-[553px] left-[339px] h-[31px] w-[272px] border-2 border-[#e3625d]"></span>
                        <p class="absolute top-[624px] left-[278px] text-[12px] leading-4 text-black">Zahlung bis 15.11.2026</p>
                    </article>
                </div>
            </main>
        </div>

        <!-- Status bar -->
        <footer class="flex h-[25px] shrink-0 items-center border-t border-[#dadde2] bg-[#ebedf2] whitespace-nowrap text-[#5b616b]">
            <span class="ml-2 rounded-[3px] bg-[#2b5acb] px-1 text-[9px] leading-[14px] font-bold text-white">UCA</span>
            <span class="ml-1">Pro</span>
            <button aria-label="Seitenleiste" class="ml-[19px] flex items-center gap-[5px]">
                <svg class="size-[12px]" viewBox="0 0 16 16"><rect x="1" y="1" width="14" height="14" rx="1" fill="#fff" stroke="#6b7aa5" stroke-width="1.400"/><path d="M2 2h4v12H2z" fill="#a8c3f5"/><path d="M6 1v14" stroke="#6b7aa5"/></svg>
                <svg class="size-[7px]"><use href="#i-chevron"/></svg>
            </button>
            <span class="ml-[14px]">595 × 842 pt</span>
            <span class="ml-2">X 257</span>
            <span class="ml-[5px]">Y 628</span>

            <div class="ml-auto flex items-center pr-[5px] text-[#2b5acb]">
                <button aria-label="Erste Seite" class="mr-3"><svg class="size-[10px]" viewBox="0 0 16 16"><path d="M1 1h2v14H1zM15 1v14L4 8z" fill="#2b5acb"/></svg></button>
                <button aria-label="Vorherige Seite" class="mr-[7px]"><svg class="size-[9px]" viewBox="0 0 16 16"><path d="M14 0v16L2 8z" fill="#2b5acb"/></svg></button>
                <input type="text" aria-label="Seite" value="1" class="h-[20px] w-[52px] rounded border border-b-2 border-[#e0e2e6] border-b-[#b0b2b6] bg-white text-center text-[10px] text-[#25282e] outline-none">
                <span class="mr-1 ml-1 text-[#5b616b]">/ 1</span>
                <button aria-label="Nächste Seite" class="mr-3"><svg class="size-[9px]" viewBox="0 0 16 16"><path d="M2 0v16l12-8z" fill="#2b5acb"/></svg></button>
                <button aria-label="Letzte Seite" class="mr-[18px]"><svg class="size-[10px]" viewBox="0 0 16 16"><path d="M13 1h2v14h-2zM1 1v14l11-7z" fill="#2b5acb"/></svg></button>
                <button aria-label="Zurück" class="mr-[9px]"><svg class="size-[12px]"><use href="#i-circle-left"/></svg></button>
                <button aria-label="Vor" class="mr-[15px]"><svg class="size-[12px]"><use href="#i-circle-right"/></svg></button>
                <button aria-label="Einzelseite" class="flex h-[18px] w-[21px] items-center justify-center"><svg class="size-[12px]"><use href="#i-page"/></svg></button>
                <button aria-label="Fortlaufend" class="flex h-[18px] w-[21px] items-center justify-center rounded-[2px] bg-[#d6e4fb]"><svg class="size-[14px]" viewBox="0 0 16 16" fill="#fff" stroke="#6f7689" stroke-width="1.300"><path d="M4 .7h5L12 3.500v3.700H4zM4 8.800h5l3 2.500v4H4z"/></svg></button>
                <button aria-label="Doppelseite" class="flex h-[18px] w-[21px] items-center justify-center"><svg class="size-[13px]" viewBox="0 0 16 16" fill="#fff" stroke="#6f7689" stroke-width="1.300"><path d="M1 3h4l2 2v8H1zM9 3h4l2 2v8H9z"/></svg></button>
                <button aria-label="Doppelseite fortlaufend" class="mr-[15px] flex h-[18px] w-[21px] items-center justify-center"><svg class="size-[14px]" viewBox="0 0 16 16" fill="#fff" stroke="#6f7689" stroke-width="1.300"><path d="M1 .7h4l2 2v4.500H1zM9 .7h4l2 2v4.500H9zM1 8.800h4l2 2v4.500H1zM9 8.800h4l2 2v4.500H9z"/></svg></button>
                <button aria-label="Verkleinern" class="mr-[7px]"><svg class="size-[12px]" viewBox="0 0 16 16" fill="none" stroke="#2b5acb" stroke-width="1.600"><circle cx="6.500" cy="6.500" r="5" fill="#fff"/><path d="M10 10l5 5M4 6.500h5"/></svg></button>
                <label class="relative flex items-center">
                    <select aria-label="Zoom" class="h-[21px] w-[68px] appearance-none rounded bg-[#fafbfc] pl-[2px] text-[10px] text-[#25282e]"><option>100 %</option></select>
                    <svg class="pointer-events-none absolute right-3 size-[8px] text-[#60656f]"><use href="#i-chevron"/></svg>
                </label>
                <button aria-label="Vergrößern" class="mr-[10px] ml-[7px]"><svg class="size-[12px]" viewBox="0 0 16 16" fill="none" stroke="#2b5acb" stroke-width="1.600"><circle cx="6.500" cy="6.500" r="5" fill="#fff"/><path d="M10 10l5 5M4 6.500h5M6.500 4v5"/></svg></button>
                <input type="range" aria-label="Zoomstufe" min="0" max="100" value="35" class="h-[3px] w-[100px] appearance-none rounded bg-linear-to-r from-[#2450b4] from-36% to-[#85878b] to-36% [&::-webkit-slider-thumb]:size-[15px] [&::-webkit-slider-thumb]:appearance-none [&::-webkit-slider-thumb]:rounded-full [&::-webkit-slider-thumb]:border-[3px] [&::-webkit-slider-thumb]:border-white [&::-webkit-slider-thumb]:bg-[#2450b4]">
            </div>
        </footer>
    </div>
</body>
</html>
